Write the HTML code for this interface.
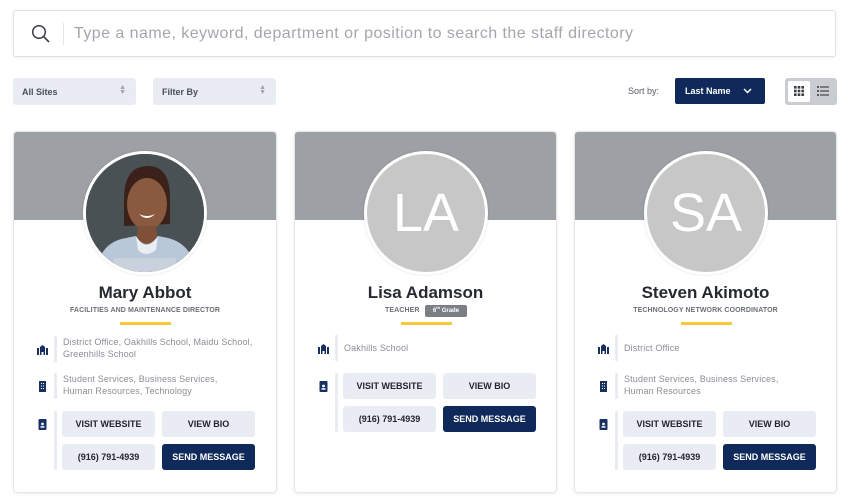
<!DOCTYPE html>
<html><head><meta charset="utf-8"><style>
*{box-sizing:border-box;margin:0;padding:0}
body{width:858px;height:500px;background:#fff;font-family:"Liberation Sans",sans-serif;position:relative;overflow:hidden}
.abs{position:absolute}
.search{left:13px;top:10px;width:823px;height:47px;border:1px solid #dfe1e5;border-radius:3px;box-shadow:0 1px 3px rgba(0,0,0,.06)}
.search .ph{position:absolute;left:60px;top:14px;font-size:16px;color:#a3a7ad;white-space:nowrap;letter-spacing:.45px}
.search .sep{position:absolute;left:49px;top:12px;width:1px;height:22px;background:#e3e5e8}
.sel{top:78px;height:27px;width:123px;background:#e9ecf2;border-radius:3px;font-size:9px;font-weight:bold;color:#4a4f57;padding:9px 0 0 9px}
.sel .ar{position:absolute;right:10px;top:7px;font-size:7px;color:#a0a4aa;line-height:5px}
.card{top:132px;width:262px;height:360px;border-radius:3px;box-shadow:0 0 0 1px #e6e7ea,0 1px 4px rgba(0,0,0,.12);overflow:hidden;background:#fff}
.card .hd{position:absolute;left:0;top:0;width:100%;height:88px;background:#9da1a5}
.av{position:absolute;left:69px;top:19px;width:124px;height:124px;border-radius:50%;border:3px solid #fff;background:#c7c7c7;color:#fff;font-size:54px;text-align:center;line-height:118px;box-shadow:0 0 2px rgba(0,0,0,.15);overflow:hidden}
.nm{position:absolute;left:0;width:100%;top:151px;text-align:center;font-size:17px;font-weight:bold;color:#262a30}
.tt{position:absolute;left:0;width:100%;top:175px;text-align:center;font-size:7px;font-weight:bold;color:#6b6f76;letter-spacing:.1px}
.yl{position:absolute;left:106px;top:190px;width:51px;height:3px;background:#f6c935}
.row{position:absolute;left:40px;border-left:3px solid #e9ecf2;padding-left:6px;font-size:9px;line-height:12px;color:#8a8e94;letter-spacing:.15px}
.ic{position:absolute;left:23px;width:11px;height:11px;color:#17305f}
.btn{position:absolute;width:93px;height:26px;border-radius:3px;background:#e9ecf2;color:#23272d;font-size:9px;font-weight:bold;text-align:center;line-height:26px}
.btn.dk{background:#0f2a5a;color:#fff}
</style></head><body>
<div class="abs search">
<svg class="abs" style="left:17px;top:13px" width="20" height="20" viewBox="0 0 20 20"><circle cx="8" cy="8" r="6.3" fill="none" stroke="#3a3e44" stroke-width="1.5"/><path d="M12.6 12.6L18 18" stroke="#3a3e44" stroke-width="1.6"/></svg>
<div class="sep"></div>
<div class="ph">Type a name, keyword, department or position to search the staff directory</div>
</div>
<div class="abs sel" style="left:13px">All Sites<span class="ar">▲<br>▼</span></div>
<div class="abs sel" style="left:153px">Filter By<span class="ar">▲<br>▼</span></div>
<div class="abs" style="left:628px;top:86px;font-size:9px;color:#555a61">Sort by:</div>
<div class="abs" style="left:675px;top:78px;width:90px;height:26px;background:#0f2a5a;border-radius:2px;color:#fff;font-size:9px;font-weight:bold;padding:8px 0 0 10px">Last Name
<svg class="abs" style="left:68px;top:10px" width="9" height="6" viewBox="0 0 9 6"><path d="M1 1l3.5 3.5L8 1" fill="none" stroke="#fff" stroke-width="1.5"/></svg></div>
<div class="abs" style="left:785px;top:78px;width:52px;height:27px;background:#c9ccd1;border-radius:3px">
<div class="abs" style="left:3px;top:3px;width:22px;height:21px;background:#fff;border-radius:2px"></div>
<svg class="abs" style="left:9px;top:8px" width="10" height="10" viewBox="0 0 10 10" fill="#3a3e44"><rect x="0" y="0" width="2.6" height="2.6"/><rect x="3.7" y="0" width="2.6" height="2.6"/><rect x="7.4" y="0" width="2.6" height="2.6"/><rect x="0" y="3.7" width="2.6" height="2.6"/><rect x="3.7" y="3.7" width="2.6" height="2.6"/><rect x="7.4" y="3.7" width="2.6" height="2.6"/><rect x="0" y="7.4" width="2.6" height="2.6"/><rect x="3.7" y="7.4" width="2.6" height="2.6"/><rect x="7.4" y="7.4" width="2.6" height="2.6"/></svg>
<svg class="abs" style="left:32px;top:8px" width="12" height="10" viewBox="0 0 12 10" fill="#555a61"><rect x="0" y="0" width="2" height="2"/><rect x="3" y="0.3" width="9" height="1.4"/><rect x="0" y="4" width="2" height="2"/><rect x="3" y="4.3" width="9" height="1.4"/><rect x="0" y="8" width="2" height="2"/><rect x="3" y="8.3" width="9" height="1.4"/></svg>
</div>

<!-- Card 1 -->
<div class="abs card" style="left:14px">
<div class="hd"></div>
<div class="av" style="background:#4b5256">
<svg width="118" height="118" viewBox="0 0 118 118" style="display:block">
<rect width="118" height="118" fill="#4a5155"/>
<path d="M38 45 Q38 12 62 12 Q84 12 84 44 L84 70 L38 72Z" fill="#3a221a"/>
<ellipse cx="61" cy="50" rx="20" ry="26" fill="#8a5a40"/>
<path d="M52 72 L70 72 L72 92 L50 92Z" fill="#7e5038"/>
<path d="M10 118 Q14 88 40 84 L50 82 Q60 98 72 82 L82 84 Q106 90 110 118Z" fill="#b8c8d8"/>
<path d="M50 82 Q60 100 72 82 L70 96 Q60 104 52 96Z" fill="#e8eef2"/>
<rect x="28" y="104" width="62" height="14" fill="#c9d2dc"/>
<path d="M53 60 Q61 68 69 60 Q61 64 53 60Z" fill="#fff"/>
</svg></div>
<div class="nm">Mary Abbot</div>
<div class="tt">FACILITIES AND MAINTENANCE DIRECTOR</div>
<div class="yl"></div>
<svg class="ic" style="top:212px" viewBox="0 0 11 11" fill="#17305f"><path d="M0 4h2v7H0zM9 4h2v7H9zM3 3l2.5-2 2.5 2v8H6.5V8h-2v3H3z"/></svg>
<div class="row" style="top:204px;height:26px">District Office, Oakhills School, Maidu School,<br>Greenhills School</div>
<svg class="ic" style="top:249px" viewBox="0 0 11 11" fill="#17305f"><path d="M2 0h7v11H2z"/><rect x="4" y="2" width="1" height="1" fill="#fff"/><rect x="6" y="2" width="1" height="1" fill="#fff"/><rect x="4" y="4.5" width="1" height="1" fill="#fff"/><rect x="6" y="4.5" width="1" height="1" fill="#fff"/><rect x="4" y="7" width="1" height="1" fill="#fff"/><rect x="6" y="7" width="1" height="1" fill="#fff"/></svg>
<div class="row" style="top:241px;height:26px">Student Services, Business Services,<br>Human Resources, Technology</div>
<svg class="ic" style="top:287px" viewBox="0 0 11 11" fill="#17305f"><rect x="1.5" y="0" width="8" height="11" rx="1"/><circle cx="5.5" cy="5" r="1.4" fill="#fff"/><rect x="3.5" y="7.2" width="4" height="1.5" fill="#fff"/></svg>
<div class="row" style="top:279px;height:59px"></div>
<div class="btn" style="left:48px;top:279px">VISIT WEBSITE</div>
<div class="btn" style="left:148px;top:279px">VIEW BIO</div>
<div class="btn" style="left:48px;top:312px">(916) 791-4939</div>
<div class="btn dk" style="left:148px;top:312px">SEND MESSAGE</div>
</div>

<!-- Card 2 -->
<div class="abs card" style="left:295px;width:261px">
<div class="hd"></div>
<div class="av">LA</div>
<div class="nm">Lisa Adamson</div>
<div class="tt" style="text-align:left;left:90px;width:auto">TEACHER</div>
<div class="abs" style="left:130px;top:173px;width:42px;height:12px;background:#7b7f85;border-radius:2px;color:#fff;font-size:6px;font-weight:bold;text-align:center;line-height:12px">6<sup style="font-size:4px;line-height:0">th</sup> Grade</div>
<div class="yl"></div>
<svg class="ic" style="top:211px" viewBox="0 0 11 11" fill="#17305f"><path d="M0 4h2v7H0zM9 4h2v7H9zM3 3l2.5-2 2.5 2v8H6.5V8h-2v3H3z"/></svg>
<div class="row" style="top:203px;height:26px;padding-top:7px">Oakhills School</div>
<svg class="ic" style="top:249px" viewBox="0 0 11 11" fill="#17305f"><rect x="1.5" y="0" width="8" height="11" rx="1"/><circle cx="5.5" cy="5" r="1.4" fill="#fff"/><rect x="3.5" y="7.2" width="4" height="1.5" fill="#fff"/></svg>
<div class="row" style="top:241px;height:59px"></div>
<div class="btn" style="left:48px;top:241px">VISIT WEBSITE</div>
<div class="btn" style="left:148px;top:241px">VIEW BIO</div>
<div class="btn" style="left:48px;top:274px">(916) 791-4939</div>
<div class="btn dk" style="left:148px;top:274px">SEND MESSAGE</div>
</div>

<!-- Card 3 -->
<div class="abs card" style="left:575px;width:261px">
<div class="hd"></div>
<div class="av">SA</div>
<div class="nm">Steven Akimoto</div>
<div class="tt">TECHNOLOGY NETWORK COORDINATOR</div>
<div class="yl"></div>
<svg class="ic" style="top:211px" viewBox="0 0 11 11" fill="#17305f"><path d="M0 4h2v7H0zM9 4h2v7H9zM3 3l2.5-2 2.5 2v8H6.5V8h-2v3H3z"/></svg>
<div class="row" style="top:203px;height:26px;padding-top:7px">District Office</div>
<svg class="ic" style="top:249px" viewBox="0 0 11 11" fill="#17305f"><path d="M2 0h7v11H2z"/><rect x="4" y="2" width="1" height="1" fill="#fff"/><rect x="6" y="2" width="1" height="1" fill="#fff"/><rect x="4" y="4.5" width="1" height="1" fill="#fff"/><rect x="6" y="4.5" width="1" height="1" fill="#fff"/><rect x="4" y="7" width="1" height="1" fill="#fff"/><rect x="6" y="7" width="1" height="1" fill="#fff"/></svg>
<div class="row" style="top:241px;height:26px">Student Services, Business Services,<br>Human Resources</div>
<svg class="ic" style="top:287px" viewBox="0 0 11 11" fill="#17305f"><rect x="1.5" y="0" width="8" height="11" rx="1"/><circle cx="5.5" cy="5" r="1.4" fill="#fff"/><rect x="3.5" y="7.2" width="4" height="1.5" fill="#fff"/></svg>
<div class="row" style="top:279px;height:59px"></div>
<div class="btn" style="left:48px;top:279px">VISIT WEBSITE</div>
<div class="btn" style="left:148px;top:279px">VIEW BIO</div>
<div class="btn" style="left:48px;top:312px">(916) 791-4939</div>
<div class="btn dk" style="left:148px;top:312px">SEND MESSAGE</div>
</div>
</body></html>
